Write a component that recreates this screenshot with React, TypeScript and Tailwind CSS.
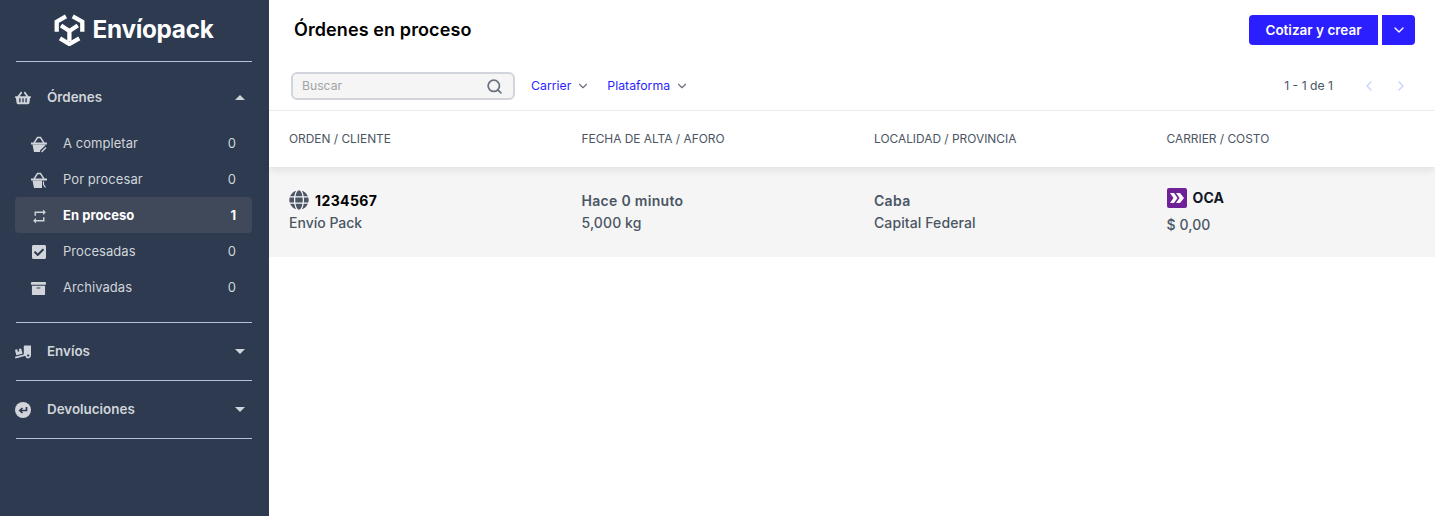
import { ChevronDown, ChevronLeft, ChevronRight, Search } from "lucide-react";
import { FaArchive, FaCheckSquare, FaGlobe, FaShoppingBasket, FaTruckLoading } from "react-icons/fa";
import { MdRepeat } from "react-icons/md";
import type { ReactNode } from "react";

function Logo() {
  return (
    <svg viewBox="0 0 31 32" className="h-[32px] w-[31px]" fill="none" stroke="#ffffff" strokeWidth="4.3">
      <path d="M2.7 17.7V7.7L12 2.3M28.3 17.7V7.7L18.7 2.3" />
      <path d="M7 11.5L15.4 17L23.8 11.5M15.4 17V27" />
      <path d="M6 24.3L15.4 30L25.3 24.3" />
    </svg>
  );
}

function Caret({ up }: { up?: boolean }) {
  return (
    <svg viewBox="0 0 10 5" className="h-[5px] w-[10px]" fill="#d1d5db">
      {up ? <path d="M0 5L5 0L10 5Z" /> : <path d="M0 0L5 5L10 0Z" />}
    </svg>
  );
}

function ReturnIcon() {
  return (
    <svg viewBox="0 0 16 16" className="h-4 w-4">
      <circle cx="8" cy="8" r="8" fill="#d1d5db" />
      <path d="M11.5 5V8.5H6M7.5 6L4.8 8.5L7.5 11" fill="none" stroke="#2d3a4f" strokeWidth="1.7" />
    </svg>
  );
}

function BasketEdit() {
  return (
    <svg viewBox="0 0 16 17" className="h-[17px] w-4" fill="#d1d5db">
      <path d="M3 7L6.5 1.5H9.5L13 7" fill="none" stroke="#d1d5db" strokeWidth="1.4" />
      <path d="M0 6.5H16V8.5H0Z" />
      <path d="M1.5 8.5H14.5L14.2 9.5L9 14.5V16H3Z" />
      <path d="M10.5 16L15 11.5" fill="none" stroke="#d1d5db" strokeWidth="1.5" />
    </svg>
  );
}

function BasketProcess() {
  return (
    <svg viewBox="0 0 16 17" className="h-[17px] w-4" fill="#d1d5db">
      <path d="M3 7L6.5 1.5H9.5L13 7" fill="none" stroke="#d1d5db" strokeWidth="1.4" />
      <path d="M0 6.5H16V8.5H0Z" />
      <path d="M1.5 8.5H11V16H3Z" />
      <path d="M12.5 9.5V12.5L14.5 15.5" fill="none" stroke="#d1d5db" strokeWidth="1.2" />
    </svg>
  );
}

function Section({ icon, label, up }: { icon: ReactNode; label: string; up?: boolean }) {
  return (
    <div className="flex h-[57px] items-center pl-[15px] pr-[24px] text-[#d1d5db]">
      <span className="flex w-[32px] items-center">{icon}</span>
      <span className="flex-1 text-[13.4px] font-semibold">{label}</span>
      <Caret up={up} />
    </div>
  );
}

function Item({ icon, label, count, active }: { icon: ReactNode; label: string; count: string; active?: boolean }) {
  return (
    <div className={`ml-[15px] mr-[17px] flex h-9 items-center rounded pl-4 pr-4 pt-[2px] text-[13px] ${active ? "bg-[#404959] font-bold text-white" : "text-[#d1d5db]"}`}>
      <span className="flex w-[32px] items-center text-[#d1d5db]">{icon}</span>
      <span className="flex-1 tracking-[0.05px]">{label}</span>
      <span>{count}</span>
    </div>
  );
}

function Divider() {
  return <div className="ml-4 mr-[17px] h-px bg-[#b4c0dc]" />;
}

function Cell({ top, bottom }: { top: string; bottom: string }) {
  return (
    <div className="flex flex-col gap-[5px] text-sm font-medium leading-[17px] tracking-[0.1px] text-[#4b5563]">
      <div className="font-semibold tracking-[0.3px]">{top}</div>
      <div>{bottom}</div>
    </div>
  );
}

export default function App() {
  return (
    <div className="flex h-[516px] w-[1435px] overflow-hidden bg-white font-['Inter',sans-serif]">
      <aside className="flex h-full w-[269px] shrink-0 flex-col bg-[#2d3a4f]">
        <div className="flex h-[61px] items-center justify-center gap-[8px] pb-[2px] pr-[2px]">
          <Logo />
          <span className="text-[24.3px] font-bold tracking-[-0.3px] text-white">Envíopack</span>
        </div>
        <Divider />
        <div className="pt-[7px]">
          <Section icon={<FaShoppingBasket size={16} />} label="Órdenes" up />
        </div>
        <div className="-mt-px flex flex-col pb-[17px]">
          <Item icon={<BasketEdit />} label="A completar" count="0" />
          <Item icon={<BasketProcess />} label="Por procesar" count="0" />
          <Item icon={<MdRepeat size={17} />} label="En proceso" count="1" active />
          <Item icon={<FaCheckSquare size={16} />} label="Procesadas" count="0" />
          <Item icon={<FaArchive size={15} />} label="Archivadas" count="0" />
        </div>
        <Divider />
        <Section icon={<FaTruckLoading size={16} />} label="Envíos" />
        <Divider />
        <Section icon={<ReturnIcon />} label="Devoluciones" />
        <Divider />
      </aside>
      <main className="flex min-w-0 flex-1 flex-col">
        <div className="flex h-[60px] items-center justify-between pl-[25px] pr-5">
          <h1 className="text-lg font-semibold tracking-[0.1px] text-black">Órdenes en proceso</h1>
          <div className="flex gap-1">
            <button className="h-[30px] w-[129px] rounded-l rounded-r-none bg-[#2c1fff] text-[13.5px] font-semibold text-white">Cotizar y crear</button>
            <button className="flex h-[30px] w-[33px] items-center justify-center rounded-l-none rounded-r bg-[#2c1fff] text-white">
              <ChevronDown size={16} />
            </button>
          </div>
        </div>
        <div className="flex h-[51px] items-center justify-between border-b border-[#f0f0f1] pl-[22px] pr-[26px] pt-[2px]">
          <div className="flex items-center">
            <div className="flex h-[28px] w-[224px] items-center justify-between rounded-md border-2 border-[#d1d5db] bg-[#f5f5f6] pl-[9px] pr-[10px]">
              <span className="pt-[1px] text-[12.2px] text-[#a3a3a3]">Buscar</span>
              <Search size={17} strokeWidth={2.5} className="text-[#6b7280]" />
            </div>
            <div className="ml-4 flex items-center gap-[5px] text-[12.3px] text-[#2c1fff]">
              Carrier <ChevronDown size={14} className="text-[#6b7280]" />
            </div>
            <div className="ml-[17px] flex items-center gap-[5px] text-[12.3px] text-[#2c1fff]">
              Plataforma <ChevronDown size={14} className="text-[#6b7280]" />
            </div>
          </div>
          <div className="flex items-center text-[12.2px] text-[#4b5563]">
            <span className="mr-[28px]">1 - 1 de 1</span>
            <ChevronLeft size={16} className="mr-4 text-[#c7d2fe]" />
            <ChevronRight size={16} className="text-[#c7d2fe]" />
          </div>
        </div>
        <div className="relative z-10 grid h-[56px] grid-cols-[repeat(4,292.5px)] items-center bg-white pl-5 text-[11.9px] text-[#4b5563] shadow-[0_3px_8px_rgba(0,0,0,0.09)]">
          <span>ORDEN / CLIENTE</span>
          <span>FECHA DE ALTA / AFORO</span>
          <span>LOCALIDAD / PROVINCIA</span>
          <span>CARRIER / COSTO</span>
        </div>
        <div className="grid h-[90px] grid-cols-[repeat(4,292.5px)] items-center bg-[#f5f5f6] pb-[2px] pl-5">
          <div className="flex flex-col gap-[5px] text-sm font-medium leading-[17px] text-[#4b5563]">
            <div className="flex h-[17px] items-center gap-[6px] font-bold tracking-[0.4px] text-black">
              <FaGlobe size={20} className="shrink-0 text-[#4b5563]" />
              1234567
            </div>
            <div>Envío Pack</div>
          </div>
          <Cell top="Hace 0 minuto" bottom="5,000 kg" />
          <Cell top="Caba" bottom="Capital Federal" />
          <div className="flex flex-col gap-2 pb-[2px] text-sm font-medium leading-[17px] tracking-[0.1px] text-[#4b5563]">
            <div className="flex h-5 items-center gap-[6px] font-bold text-[#111827]">
              <span className="flex h-5 w-5 items-center justify-center rounded-[2px] bg-[#6f2198]">
                <svg viewBox="0 0 14 10" className="h-[10px] w-[14px]" fill="#ffffff">
                  <path d="M0 0H4L7.5 5L4 10H0L3.5 5Z" />
                  <path d="M6 0H10L14 5L10 10H6L9.5 5Z" />
                </svg>
              </span>
              OCA
            </div>
            <div>$ 0,00</div>
          </div>
        </div>
      </main>
    </div>
  );
}
